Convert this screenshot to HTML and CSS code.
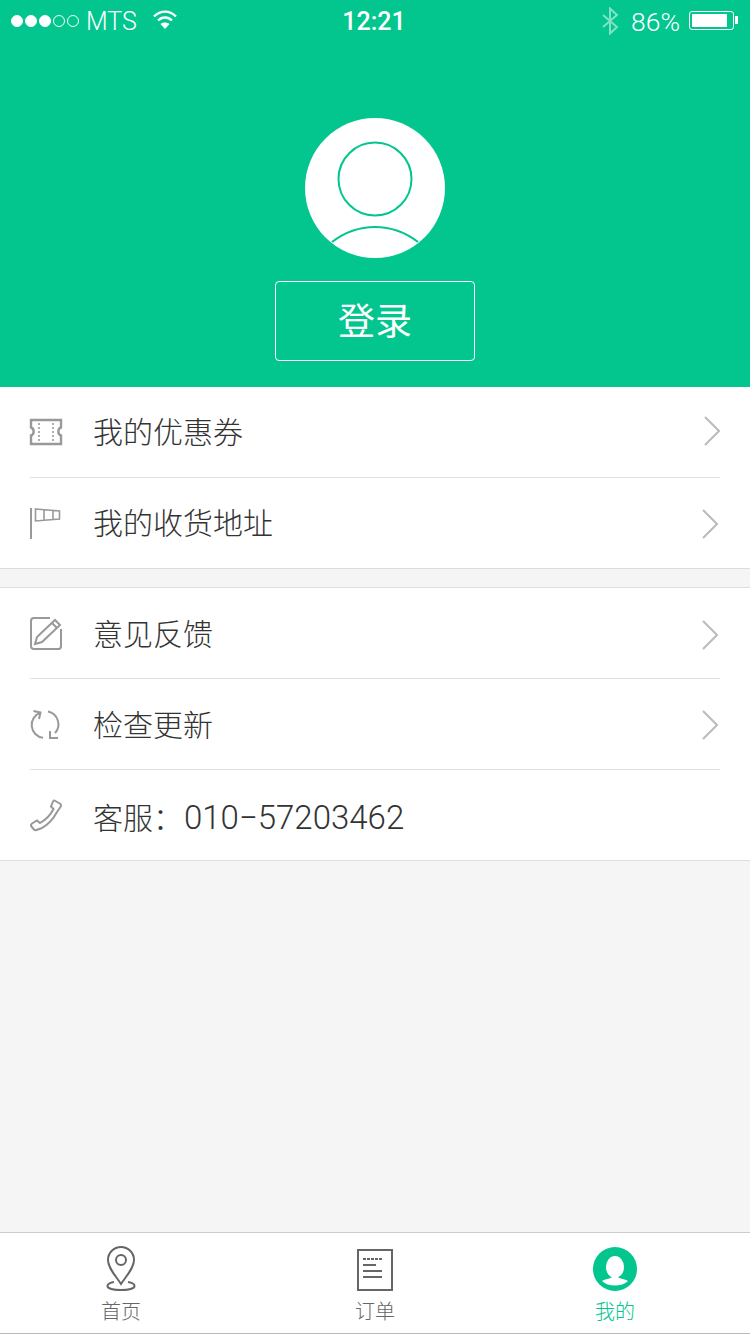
FILE: index.html
```html
<!DOCTYPE html>
<html lang="zh-CN">
<head>
    <meta charset="UTF-8" />
    <meta name="viewport" content="width=device-width, initial-scale=1.0" />
    <title>我的</title>
    <link rel="stylesheet" href="styles.css">
</head>
<body>
    <header class="hero">
        <div class="status">
            <div class="status-side">
                <span class="signal"><i class="on"></i><i class="on"></i><i class="on"></i><i></i><i></i></span>
                <span class="carrier">MTS</span>
                <svg class="wifi" width="26" height="22" viewBox="0 0 26 22" fill="none" stroke="#fff" stroke-width="2.4">
                    <path d="M2 8.500C8.500 2 17.500 2 24 8.500" />
                    <path d="M6 12.500C10 8.500 16 8.500 20 12.500" />
                    <path d="M13 21l-4.500-5c2.500-2 6.500-2 9 0z" fill="#fff" stroke="none" />
                </svg>
            </div>
            <div class="clock">12:21</div>
            <div class="status-side status-right">
                <svg class="bt" width="18" height="28" viewBox="0 0 18 28" fill="none" stroke="#fff" stroke-width="2" opacity="0.5">
                    <path d="M2 8l14 12-7 6.500V1.500L16 8 2 20" />
                </svg>
                <span class="percent">86%</span>
                <span class="battery"><span class="battery-fill"></span></span>
            </div>
        </div>

        <svg class="avatar" width="140" height="140" viewBox="0 0 140 140">
            <circle cx="70" cy="70" r="70" fill="#fff" />
            <circle cx="70" cy="61" r="36.500" fill="none" stroke="#02c68e" stroke-width="2" />
            <path d="M27 124C53 104 87 104 113 124" fill="none" stroke="#02c68e" stroke-width="2" />
        </svg>
        <button class="login"><span>登录</span></button>
    </header>

    <section class="group">
        <div class="row">
            <svg class="row-icon" width="34" height="28" viewBox="0 0 34 28" fill="none" stroke="#999" stroke-width="2.400">
                <path d="M2 2h30v7.500c-3.500 1-3.500 7 0 8V26H2v-8.500c3.500-1 3.500-7 0-8z" />
                <path d="M10 5v19M24 5v19" stroke-width="1.600" stroke-dasharray="2 2" />
            </svg>
            <span class="row-label">我的优惠券</span>
            <svg class="chevron chevron-far" width="16" height="30" viewBox="0 0 16 30" fill="none" stroke="#bbb" stroke-width="2"><path d="M1 1l14 14L1 29" /></svg>
        </div>
        <div class="row">
            <svg class="row-icon" width="34" height="32" viewBox="0 0 34 32" fill="none" stroke="#999" stroke-width="2">
                <path d="M2 1v31" />
                <path d="M6.500 2l24 2v8l-24 2zM15 3v10M24 4v8" stroke-width="1.600" />
            </svg>
            <span class="row-label">我的收货地址</span>
            <svg class="chevron" width="16" height="30" viewBox="0 0 16 30" fill="none" stroke="#bbb" stroke-width="2"><path d="M1 1l14 14L1 29" /></svg>
        </div>
    </section>

    <section class="group group-second">
        <div class="row">
            <svg class="row-icon" width="34" height="34" viewBox="0 0 34 34" fill="none" stroke="#999" stroke-width="2">
                <path d="M21 2H5a3 3 0 0 0-3 3v25a3 3 0 0 0 3 3h25a3 3 0 0 0 2-3V13" />
                <path d="M26 4l5 5L13 26l-7 2 2-7zM23 7l5 5" />
            </svg>
            <span class="row-label">意见反馈</span>
            <svg class="chevron chevron-low" width="16" height="30" viewBox="0 0 16 30" fill="none" stroke="#bbb" stroke-width="2"><path d="M1 1l14 14L1 29" /></svg>
        </div>
        <div class="row">
            <svg class="row-icon" width="34" height="32" viewBox="0 0 34 32" fill="none" stroke="#999" stroke-width="2">
                <path d="M11.500 4.600A13 13 0 0 0 14 29.800" />
                <path d="M4.500 3l7 1.600L10 11" />
                <path d="M19 3.500A13 13 0 0 1 26 25" />
                <path d="M21 23v7h8" />
            </svg>
            <span class="row-label">检查更新</span>
            <svg class="chevron" width="16" height="30" viewBox="0 0 16 30" fill="none" stroke="#bbb" stroke-width="2"><path d="M1 1l14 14L1 29" /></svg>
        </div>
        <div class="row">
            <svg class="row-icon" width="34" height="34" viewBox="0 0 34 34" fill="none" stroke="#999" stroke-width="2">
                <path d="M25.500 2.500L31.500 6q1 1 .3 2.500L28 14q-6 11-15 16l-5.500 2q-1.500.5-2.500-.5L2 28q-.5-1.500 1-2.500l5-3 3 2.500q9-5 13.500-14L22 8.500l2-5q.5-1.300 1.500-1z" />
            </svg>
            <span class="row-label row-label-phone">客服：<span class="phone">010−57203462</span></span>
        </div>
    </section>

    <div class="spacer"></div>

    <nav class="tabs">
        <div class="tab">
            <svg width="32" height="46" viewBox="0 0 32 46" fill="none" stroke="#666" stroke-width="2">
                <path d="M16 38C10 29 3 22 3 14a13 13 0 0 1 26 0c0 8-7 15-13 24z" />
                <circle cx="16" cy="14" r="5" />
                <path d="M9 36c-4 .7-6.500 2-6.500 4 0 2.500 6 4 13.500 4s13.500-1.500 13.500-4c0-2-2.500-3.300-6.500-4" />
            </svg>
            <span>首页</span>
        </div>
        <div class="tab">
            <svg width="36" height="46" viewBox="0 0 36 46" fill="none" stroke="#666" stroke-width="2">
                <path d="M1 4h34v40H1z" />
                <path d="M6 13h19" stroke-dasharray="3 1" />
                <path d="M6 19h13M6 25h19M6 31h19" />
            </svg>
            <span>订单</span>
        </div>
        <div class="tab tab-on">
            <svg width="44" height="46" viewBox="0 0 44 46">
                <circle cx="22" cy="23" r="22" fill="#02c68e" />
                <ellipse cx="22" cy="21" rx="9" ry="11" fill="#fff" />
                <path d="M9 35c5-3 9-2 10-4h6c1 2 5 1 10 4-6 6-20 6-26 0z" fill="#fff" />
            </svg>
            <span>我的</span>
        </div>
    </nav>
</body>
</html>
```

FILE: styles.css
```css
html, body { margin: 0; height: 100%; }
body { display: flex; flex-direction: column; width: 750px; height: 1334px; background-color: #f5f5f5; color: #333; font-family: Roboto, "Noto Sans CJK SC", sans-serif; overflow: hidden; }

.hero { display: flex; flex-direction: column; align-items: center; height: 387px; background-color: #02c68e; color: #fff; }

.status { display: flex; justify-content: space-between; align-items: center; box-sizing: border-box; width: 100%; height: 42px; padding: 0 16px 0 14px; font-size: 24px; font-weight: 300; }
.status-side { display: flex; align-items: center; width: 250px; }
.status-right { justify-content: flex-end; }
.signal { display: flex; gap: 2px; margin-left: -3px; }
.signal i { box-sizing: border-box; width: 12px; height: 12px; border: 1px solid #fff; border-radius: 50%; }
.signal i.on { background-color: #fff; }
.carrier { margin-left: 7px; font-size: 25px; }
.wifi { margin-left: 15px; margin-top: -4px; }
.clock { font-weight: 500; font-size: 25px; }
.bt { margin-right: 12px; }
.percent { margin-right: 9px; font-size: 26.500px; }
.battery { position: relative; box-sizing: border-box; width: 45px; height: 19px; margin-top: -2px; padding: 2px 2px; border: 1px solid #fff; border-radius: 3px; }
.battery::after { content: ""; position: absolute; top: 4px; right: -5px; width: 3px; height: 8px; background-color: #fff; }
.battery-fill { display: block; width: 35px; height: 13px; background-color: #fff; }

.avatar { display: block; margin-top: 76px; }
.login { width: 200px; height: 80px; margin-top: 23px; padding: 0 0 4px; background: none; border: 1px solid #fff; border-radius: 4px; color: #fff; font-family: "Noto Sans CJK SC", sans-serif; font-size: 37px; font-weight: 400; }

.group { background-color: #fff; border-bottom: 1px solid #ddd; }
.group-second { margin-top: 18px; border-top: 1px solid #ddd; }

.row { display: flex; align-items: center; height: 90px; margin: 0 30px; padding-right: 2px; border-bottom: 1px solid #e2e2e2; }
.row:last-child { border-bottom: none; }
.row-icon { flex: none; width: 34px; margin: 0 30px 0 -1px; }
.row-label { flex: 1; padding-bottom: 4px; font-family: "Noto Sans CJK SC", sans-serif; font-size: 30px; font-weight: 300; color: #333; }
.group-second .row-label { padding-bottom: 2px; }
.group-second .row-label-phone { padding: 2px 0 0; }
.phone { font-family: Roboto, sans-serif; font-size: 33px; margin-left: 1px; }
.chevron { flex: none; margin-top: 2px; }
.chevron-far { margin: 0 -2px 2px 0; }
.chevron-low { margin-top: 4px; }

.spacer { flex: 1; }

.tabs { display: grid; grid-template-columns: 242px 266px 214px; height: 100px; background-color: #fff; border-top: 1px solid #ccc; border-bottom: 1px solid #bbb; }
.tab { display: flex; flex-direction: column; align-items: center; padding-top: 13px; color: #666; font-size: 20px; font-family: "Noto Sans CJK SC", sans-serif; font-weight: 300; line-height: 28px; }
.tab svg { display: block; margin-bottom: 5px; }
.tab-on { color: #02c68e; }
```
